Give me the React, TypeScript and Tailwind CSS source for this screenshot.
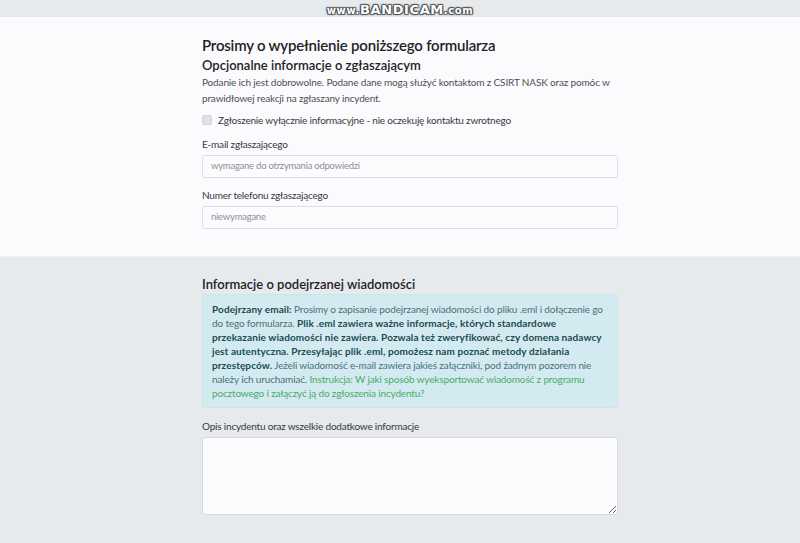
export default function App() {
  const font = { fontFamily: 'Lato, "Open Sans", sans-serif' };
  const outline = "[text-shadow:0_0_1px_#333,1px_1px_1px_#555,-1px_-1px_1px_#555,1px_-1px_1px_#555,-1px_1px_1px_#555]";
  return (
    <div className="min-h-[543px] bg-[#e6eaed] text-[#212529]" style={font}>
      <div className="h-[17px] flex items-center justify-center">
        <span className={`font-bold text-white tracking-[0.6px] ${outline}`} style={{ fontFamily: '"DejaVu Sans", sans-serif' }}>
          <span className="text-[10px]">www.</span>
          <span className="text-[13px]">BANDICAM</span>
          <span className="text-[10px]">.com</span>
        </span>
      </div>

      <section className="bg-[#fbfbfd] pb-[27px] border-b border-[#eef0f2]">
        <div className="w-[416px] ml-[202px] pt-[18px]">
          <h2 className="text-[15px] leading-[20px] font-semibold tracking-[-0.2px] text-[#1e2226]">
            Prosimy o wypełnienie poniższego formularza
          </h2>
          <h3 className="mt-[1px] text-[13px] leading-[18px] font-semibold text-[#1e2226]">Opcjonalne informacje o zgłaszającym</h3>
          <p className="text-[10px] leading-[16px] tracking-[-0.15px] text-[#4a5056]">
            Podanie ich jest dobrowolne. Podane dane mogą służyć kontaktom z CSIRT NASK oraz pomóc w prawidłowej reakcji na zgłaszany incydent.
          </p>
          <label className="mt-[6px] flex items-center gap-[6px] text-[10px] leading-[16px] tracking-[-0.2px] text-[#343a40]">
            <span className="w-[10px] h-[10px] rounded-[2px] bg-[#dfe1e4] border border-[#cfd2d6]" />
            Zgłoszenie wyłącznie informacyjne - nie oczekuję kontaktu zwrotnego
          </label>

          <div className="mt-[8px] text-[10px] leading-[16px] tracking-[-0.2px] text-[#343a40]">E-mail zgłaszającego</div>
          <div className="mt-[3px] h-[23px] rounded-[3px] border border-[#dcdfe3] bg-[#fcfcfe] px-[8px] flex items-center text-[9.5px] tracking-[-0.25px] text-[#8a9096]">
            wymagane do otrzymania odpowiedzi
          </div>

          <div className="mt-[9px] text-[10px] leading-[16px] tracking-[-0.2px] text-[#343a40]">Numer telefonu zgłaszającego</div>
          <div className="mt-[3px] h-[23px] rounded-[3px] border border-[#dcdfe3] bg-[#fcfcfe] px-[8px] flex items-center text-[9.5px] tracking-[-0.25px] text-[#8a9096]">
            niewymagane
          </div>
        </div>
      </section>

      <section className="pb-6">
        <div className="w-[416px] ml-[202px] pt-[18px]">
          <h3 className="text-[13px] leading-[18px] font-semibold text-[#1e2226]">Informacje o podejrzanej wiadomości</h3>
          {/* line breaks follow the original wrap */}
          <div className="mt-[1px] whitespace-nowrap rounded-[3px] border border-[#c9e6ec] bg-[#d3ebf0] px-[9px] py-[7px] text-[10px] leading-[14px] tracking-[-0.15px] text-[#4a7279]">
            <b className="text-[#1b4a52] tracking-[0.1px]">Podejrzany email:</b> Prosimy o zapisanie podejrzanej wiadomości do pliku .eml i dołączenie go
            <br />
            do tego formularza.{" "}
            <b className="text-[#1b4a52] tracking-[0.1px]">
              Plik .eml zawiera ważne informacje, których standardowe
              <br />
              przekazanie wiadomości nie zawiera. Pozwala też zweryfikować, czy domena nadawcy
              <br />
              jest autentyczna. Przesyłając plik .eml, pomożesz nam poznać metody działania
              <br />
              przestępców.
            </b>{" "}
            Jeżeli wiadomość e-mail zawiera jakieś załączniki, pod żadnym pozorem nie
            <br />
            należy ich uruchamiać.{" "}
            <a className="text-[#4caa66]">
              Instrukcja: W jaki sposób wyeksportować wiadomość z programu
              <br />
              pocztowego i załączyć ją do zgłoszenia incydentu?
            </a>
          </div>

          <div className="mt-[10px] text-[10px] leading-[16px] tracking-[-0.2px] text-[#343a40]">Opis incydentu oraz wszelkie dodatkowe informacje</div>
          <textarea className="mt-[3px] block w-full h-[78px] rounded-[3px] border border-[#d6d9dd] bg-[#fcfcfe] outline-none" />
        </div>
      </section>
    </div>
  );
}
